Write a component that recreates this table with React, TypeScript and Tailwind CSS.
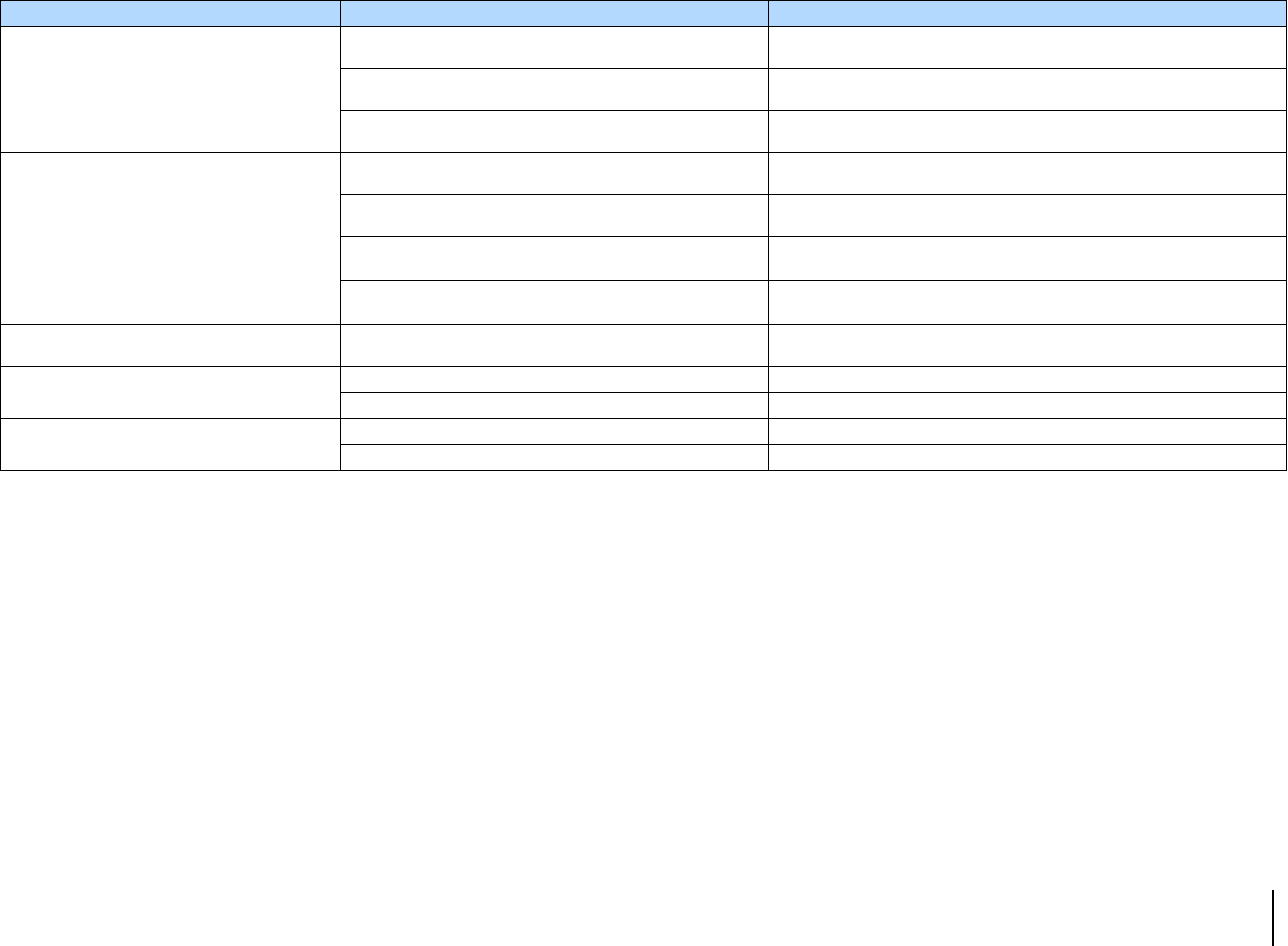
import React from 'react'

// row heights for each group, per sub-row (px, incl. bottom border)
const groups: number[][] = [
  [42, 42, 42],
  [42, 42, 44, 44],
  [42],
  [26, 26],
  [26, 26],
]

function Group({ rows }: { rows: number[] }) {
  return (
    <div className="flex">
      <div className="w-[340px] shrink-0 border-r border-b border-black" />
      <div className="flex flex-col">
        {rows.map((h, i) => (
          <div key={i} className="flex" style={{ height: h }}>
            <div className="w-[428px] shrink-0 border-r border-b border-black" />
            <div className="w-[518px] shrink-0 border-r border-b border-black" />
          </div>
        ))}
      </div>
    </div>
  )
}

export default function App() {
  return (
    <div className="w-[1288px] h-[946px] overflow-hidden bg-white font-['Liberation_Sans',Arial,sans-serif]">
      <div className="w-[1287px] border-t border-l border-black">
        <div className="flex h-[26px] bg-[#b3d9fe]">
          <div className="w-[340px] shrink-0 border-r border-b border-black" />
          <div className="w-[428px] shrink-0 border-r border-b border-black" />
          <div className="w-[518px] shrink-0 border-r border-b border-black" />
        </div>
        {groups.map((rows, i) => (
          <Group key={i} rows={rows} />
        ))}
      </div>
      <div className="mt-[419px] flex pl-[1272px]">
        <div className="w-[2px] h-[56px] bg-black" />
      </div>
    </div>
  )
}
